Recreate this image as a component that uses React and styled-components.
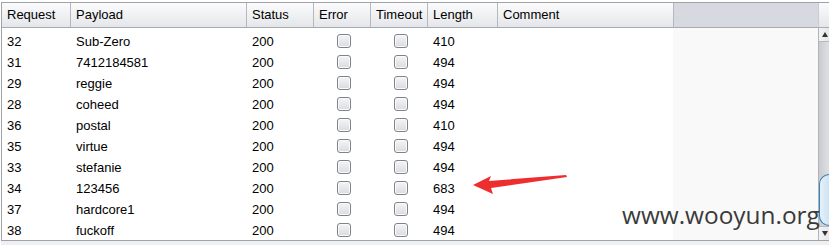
import React from "react";
import styled, { createGlobalStyle } from "styled-components";

const Global = createGlobalStyle`
  html, body { margin: 0; padding: 0; background: #ffffff; overflow: hidden; }
  body { width: 829px; height: 245px; font-family: "Liberation Sans", Arial, sans-serif; }
`;

const Page = styled.div`
  position: relative;
  width: 829px;
  height: 245px;
  padding: 2px 0 0 1px;
  box-sizing: border-box;
  display: flex;
  flex-direction: column;
  overflow: hidden;
  background: #ffffff;
`;

const Frame = styled.div`
  display: flex;
  border: 1px solid #9fa3a8;
  border-right: none;
  height: 239px;
  box-sizing: border-box;
  width: 840px;
`;

const TableArea = styled.div`
  display: flex;
  flex-direction: column;
  width: 816px;
`;

const cols = "69px 176px 67px 57px 57px 70px 176px 144px";

const HeaderRow = styled.div`
  display: grid;
  grid-template-columns: ${cols};
  height: 25px;
  border-bottom: 1px solid #a7abb0;
  box-sizing: border-box;
  background: linear-gradient(#fbfbfc 0%, #f1f2f4 45%, #e4e6e9 100%);
`;

const HeadCell = styled.div`
  display: flex;
  align-items: center;
  padding-left: 5px;
  padding-bottom: 1px;
  border-right: 1px solid ${p => (p.$last ? "transparent" : "#b5b9bf")};
  font-size: 13px;
  color: #000;
  background: ${p => (p.$filler ? "#d6d9df" : "transparent")};
  box-sizing: border-box;
`;

const Body = styled.div`
  display: flex;
  flex-direction: column;
  padding-top: 2px;
  flex: 1;
  background: linear-gradient(to right, #ffffff 0, #ffffff 671px, #f9f9f9 671px);
`;

const Row = styled.div`
  display: grid;
  grid-template-columns: ${cols};
  height: 21px;
`;

const Cell = styled.div`
  display: flex;
  align-items: center;
  justify-content: ${p => (p.$center ? "center" : "flex-start")};
  padding-left: ${p => (p.$center ? "0" : "5px")};
  padding-top: 1px;
  font-size: 13px;
  color: #000;
`;

const Check = styled.span`
  display: block;
  width: 14px;
  height: 14px;
  box-sizing: border-box;
  border: 1px solid #7f8388;
  border-radius: 3px;
  margin-left: ${p => p.$shift}px;
  background: linear-gradient(#f4f5f6, #d9dbdf);
  box-shadow: inset 0 0 0 1px #fbfbfb;
`;

const Scrollbar = styled.div`
  display: flex;
  flex-direction: column;
  width: 16px;
`;

const ScrollCorner = styled.div`
  height: 25px;
  border-bottom: 1px solid #a7abb0;
  box-sizing: border-box;
  background: linear-gradient(#fbfbfc, #e4e6e9);
  border-left: 1px solid #c8ccd2;
`;

const Track = styled.div`
  flex: 1;
  display: flex;
  flex-direction: column;
  background: linear-gradient(to right, #c9cbce, #dcdee1 60%, #c5c7ca);
  border-left: 1px solid #b0b3b7;
`;

const ArrowBtn = styled.div`
  height: 14px;
  display: flex;
  align-items: center;
  justify-content: flex-start;
  padding-left: 3px;
  background: linear-gradient(to right, #f3f3f3, #e2e2e2);
  border-bottom: ${p => (p.$up ? "1px solid #b7b9bc" : "none")};
  border-top: ${p => (p.$up ? "none" : "1px solid #b7b9bc")};
  box-sizing: border-box;
`;

const Tri = styled.span`
  width: 0;
  height: 0;
  border-left: 3px solid transparent;
  border-right: 3px solid transparent;
  ${p => (p.$up ? "border-bottom: 5px solid #333;" : "border-top: 5px solid #333;")}
`;

const TrackSpace = styled.div`
  flex: 1;
`;

const Thumb = styled.div`
  height: 52px;
  border: 1px solid #3c7fb1;
  border-right: none;
  border-radius: 10px 0 0 10px;
  background: linear-gradient(to right, #e4f1fb, #c2dcef);
  box-sizing: border-box;
`;

const BottomStrip = styled.div`
  height: 4px;
  background: #eef0f2;
`;

const Watermark = styled.div`
  position: absolute;
  left: 622px;
  top: 198px;
  font-family: "Open Sans", "Noto Sans", sans-serif;
  font-size: 24.4px;
  color: #3a3a3a;
  white-space: nowrap;
`;

const ArrowSvg = styled.svg`
  position: absolute;
  left: 0;
  top: 0;
  pointer-events: none;
`;

const rows = [
  ["32", "Sub-Zero", "200", "410"],
  ["31", "7412184581", "200", "494"],
  ["29", "reggie", "200", "494"],
  ["28", "coheed", "200", "494"],
  ["36", "postal", "200", "410"],
  ["35", "virtue", "200", "494"],
  ["33", "stefanie", "200", "494"],
  ["34", "123456", "200", "683"],
  ["37", "hardcore1", "200", "494"],
  ["38", "fuckoff", "200", "494"],
];

const headers = ["Request", "Payload", "Status", "Error", "Timeout", "Length", "Comment"];

export default function App() {
  return (
    <>
      <Global />
      <Page>
        <Frame>
          <TableArea>
            <HeaderRow>
              {headers.map(h => (
                <HeadCell key={h}>{h}</HeadCell>
              ))}
              <HeadCell $filler $last />
            </HeaderRow>
            <Body>
              {rows.map(r => (
                <Row key={r[0]}>
                  <Cell>{r[0]}</Cell>
                  <Cell>{r[1]}</Cell>
                  <Cell>{r[2]}</Cell>
                  <Cell $center><Check $shift={3} /></Cell>
                  <Cell $center><Check $shift={2} /></Cell>
                  <Cell>{r[3]}</Cell>
                  <Cell />
                  <Cell />
                </Row>
              ))}
            </Body>
          </TableArea>
          <Scrollbar>
            <ScrollCorner />
            <Track>
              <ArrowBtn $up><Tri $up /></ArrowBtn>
              <TrackSpace />
              <Thumb />
              <ArrowBtn><Tri /></ArrowBtn>
            </Track>
          </Scrollbar>
        </Frame>
        <BottomStrip />
        <ArrowSvg width="829" height="245" viewBox="0 0 829 245">
          <polygon
            points="473,185 491,176 489,181 566,175 567,177 491,188 493,194"
            fill="#ee2e2e"
          />
        </ArrowSvg>
        <Watermark>www.wooyun.org</Watermark>
      </Page>
    </>
  );
}
